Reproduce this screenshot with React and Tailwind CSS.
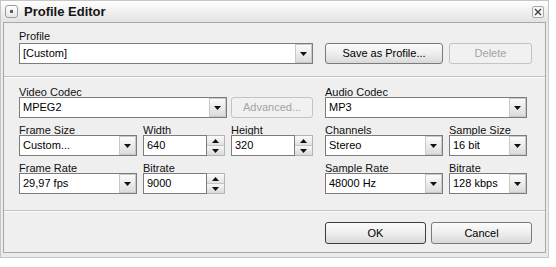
import clsx from 'clsx';

function Tri({ up = false }) {
  return (
    <svg width="7" height="4" viewBox="0 0 7 4" className="block">
      <path d={up ? 'M0 4 L3.5 0 L7 4 Z' : 'M0 0 L7 0 L3.5 4 Z'} fill="#111" />
    </svg>
  );
}

function ComboBox({ value, className }) {
  return (
    <div className={clsx('flex h-[21px] border border-[#7c7c7c] bg-white', className)}>
      <div className="min-w-0 flex-1 truncate pl-[3px] text-[11px] leading-[19px] text-black">{value}</div>
      <div className="flex w-[17px] items-center justify-center border border-[#c9c9c9] bg-gradient-to-b from-[#fbfbfb] to-[#dcdcdc]">
        <Tri />
      </div>
    </div>
  );
}

function SpinBox({ value, className }) {
  return (
    <div className={clsx('flex h-[21px]', className)}>
      <div className="min-w-0 flex-1 border border-[#7c7c7c] bg-white pl-[3px] text-[11px] leading-[19px] text-black">{value}</div>
      <div className="flex w-[18px] flex-col border border-l-0 border-[#b4b4b4]">
        <div className="flex flex-1 items-center justify-center border-b border-[#c4c4c4] bg-gradient-to-b from-[#fbfbfb] to-[#e2e2e2]">
          <Tri up />
        </div>
        <div className="flex flex-1 items-center justify-center bg-gradient-to-b from-[#f7f7f7] to-[#dadada]">
          <Tri />
        </div>
      </div>
    </div>
  );
}

function Button({ children, className, disabled, primary }) {
  return (
    <div
      className={clsx(
        'flex items-center justify-center rounded-[3px] border text-[11px]',
        disabled
          ? 'border-[#c3c3c3] bg-[#f1f1f1] text-[#a3a3a3]'
          : 'bg-gradient-to-b from-[#fbfbfb] via-[#eeeeee] to-[#d9d9d9] text-black',
        !disabled && (primary ? 'border-[#3d3d3d]' : 'border-[#7a7a7a]'),
        className
      )}
    >
      {children}
    </div>
  );
}

function Field({ label, width, children, labelClass }) {
  return (
    <div className="flex flex-col" style={{ width }}>
      <div className={clsx('h-[11px] text-[11px] leading-[13px] text-[#111]', labelClass)}>{label}</div>
      {children}
    </div>
  );
}

function Separator() {
  return <div className="h-[2px] border-t border-b border-t-[#c3c3c3] border-b-[#fbfbfb]" />;
}

export default function App() {
  return (
    <div className="h-[267px] w-[556px] bg-white font-['Liberation_Sans',Arial,sans-serif]">
      <div className="flex h-[258px] w-[549px] flex-col border border-[#c6c6c6] bg-[#ebebeb]">
        {/* title bar */}
        <div className="flex h-[21px] items-center bg-gradient-to-b from-[#fefefe] to-[#e3e3e3] pl-[4px] pr-[4px]">
          <div className="flex h-[13px] w-[13px] items-center justify-center rounded-[3px] border border-[#9c9c9c] bg-gradient-to-b from-[#ffffff] to-[#e6e6e6]">
            <div className="h-[3px] w-[3px] bg-[#5a5a5a]" />
          </div>
          <div className="ml-[6px] text-[13px] font-bold leading-[21px] text-[#151515]">Profile Editor</div>
          <div className="ml-auto flex h-[12px] w-[12px] items-center justify-center rounded-[2px] border border-[#a9a9a9] bg-[#f6f6f6]">
            <svg width="8" height="8" viewBox="0 0 8 8" className="block">
              <path d="M1 1 L7 7 M7 1 L1 7" stroke="#3f3f3f" strokeWidth="1.4" />
            </svg>
          </div>
        </div>

        <div className="flex-1 px-[2px] pb-[4px]">
          <div className="h-[231px] border border-[#a8a8a8] bg-[#efefef]">
            {/* profile */}
            <div className="flex items-end pb-[12px] pl-[15px] pr-[13px] pt-[7px]">
              <Field label="Profile" width={294} labelClass="mb-[2px]">
                <ComboBox value="[Custom]" />
              </Field>
              <Button className="ml-[12px] h-[21px] w-[118px]">Save as Profile...</Button>
              <Button disabled className="ml-[6px] h-[21px] w-[83px]">Delete</Button>
            </div>

            <Separator />

            {/* codecs */}
            <div className="flex gap-[12px] pb-[16px] pl-[15px] pr-[13px] pt-[8px]">
              <div className="flex w-[294px] flex-col gap-[6px]">
                <div className="flex items-end gap-[4px]">
                  <Field label="Video Codec" width={208}>
                    <ComboBox value="MPEG2" />
                  </Field>
                  <Button disabled className="h-[21px] w-[82px]">Advanced...</Button>
                </div>
                <div className="flex gap-[6px]">
                  <Field label="Frame Size" width={118}>
                    <ComboBox value="Custom..." />
                  </Field>
                  <Field label="Width" width={82}>
                    <SpinBox value="640" />
                  </Field>
                  <Field label="Height" width={82}>
                    <SpinBox value="320" />
                  </Field>
                </div>
                <div className="flex gap-[6px]">
                  <Field label="Frame Rate" width={118}>
                    <ComboBox value="29,97 fps" />
                  </Field>
                  <Field label="Bitrate" width={82}>
                    <SpinBox value="9000" />
                  </Field>
                </div>
              </div>

              <div className="flex w-[202px] flex-col gap-[6px]">
                <Field label="Audio Codec" width={202}>
                  <ComboBox value="MP3" />
                </Field>
                <div className="flex gap-[6px]">
                  <Field label="Channels" width={118}>
                    <ComboBox value="Stereo" />
                  </Field>
                  <Field label="Sample Size" width={78}>
                    <ComboBox value="16 bit" />
                  </Field>
                </div>
                <div className="flex gap-[6px]">
                  <Field label="Sample Rate" width={118}>
                    <ComboBox value="48000 Hz" />
                  </Field>
                  <Field label="Bitrate" width={78}>
                    <ComboBox value="128 kbps" />
                  </Field>
                </div>
              </div>
            </div>

            <Separator />

            {/* actions */}
            <div className="flex justify-end gap-[5px] pb-[8px] pl-[15px] pr-[13px] pt-[10px]">
              <Button primary className="h-[22px] w-[101px]">OK</Button>
              <Button className="h-[22px] w-[101px]">Cancel</Button>
            </div>
          </div>
        </div>
      </div>
    </div>
  );
}
